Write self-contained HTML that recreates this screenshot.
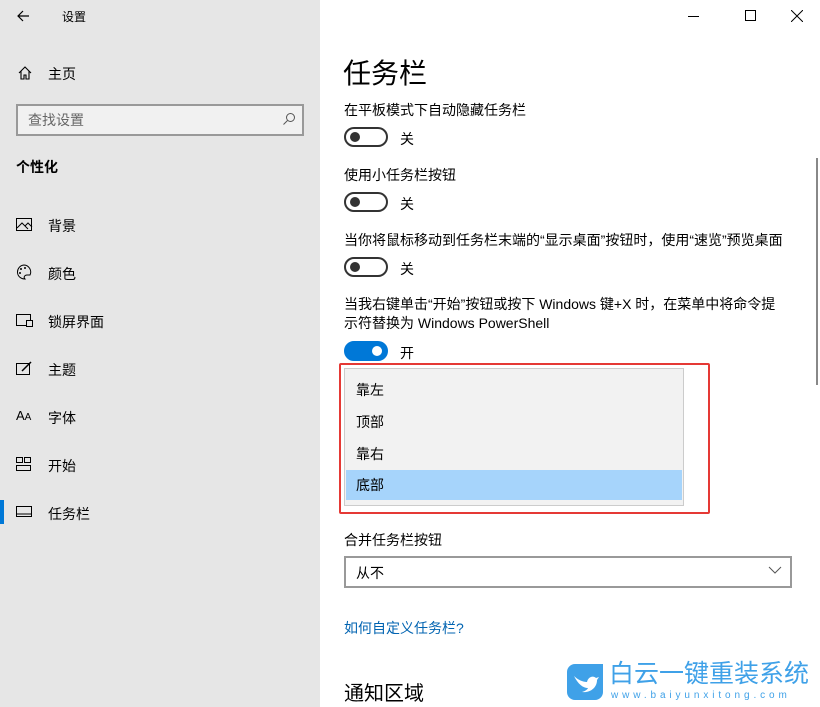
<!DOCTYPE html>
<html><head><meta charset="utf-8"><style>
*{margin:0;padding:0;box-sizing:border-box}
body{width:820px;height:707px;overflow:hidden;background:#fff;font-family:"Liberation Sans","Noto Sans CJK SC",sans-serif;color:#000;position:relative}
.a{position:absolute;white-space:nowrap}
#side{position:absolute;left:0;top:0;width:320px;height:707px;background:#e6e6e6}
.t14{font-size:14px}
.tog{position:absolute;width:44px;height:20px;border:2px solid #333;border-radius:10px}
.tog i{position:absolute;left:4px;top:3px;width:10px;height:10px;border-radius:50%;background:#333}
.on{background:#0078d7;border-color:#0078d7}
.on i{left:auto;right:4px;background:#fff}
svg{position:absolute}
</style></head><body>
<div id="side">
<svg style="left:16px;top:9px" width="14" height="14" viewBox="0 0 14 14"><path d="M13 7H2M7 2L2 7l5 5" stroke="#000" fill="none" stroke-width="1.2"/></svg>
<div class="a" style="left:62px;top:8px;font-size:12px">设置</div>
<svg style="left:17px;top:65px" width="16" height="16" viewBox="0 0 16 16"><path d="M2 8L8 2l6 6M4 6v8h3v-4h2v4h3V6" stroke="#000" fill="none" stroke-width="1.1"/></svg>
<div class="a t14" style="left:48px;top:64px">主页</div>
<div class="a" style="left:16px;top:104px;width:288px;height:32px;border:2px solid #999;background:#f1f1f1"></div>
<div class="a t14" style="left:28px;top:110px;color:#666">查找设置</div>
<svg style="left:282px;top:112px" width="14" height="14" viewBox="0 0 14 14"><circle cx="8.5" cy="5.5" r="4" stroke="#555" fill="none"/><path d="M5.5 8.5L1.5 12.5" stroke="#555"/></svg>
<div class="a t14" style="left:16px;top:157px;font-weight:bold">个性化</div>
<svg style="left:16px;top:218px" width="17" height="14" viewBox="0 0 17 14"><rect x=".5" y=".5" width="15" height="12" stroke="#000" fill="none"/><path d="M1 10l5-5 6 6M9 8l3-3 4 4" stroke="#000" fill="none"/></svg>
<div class="a t14" style="left:48px;top:216px">背景</div>
<svg style="left:16px;top:264px" width="16" height="16" viewBox="0 0 16 16"><path d="M8 1a7 7 0 1 0 1 14c-2-2 0-4 2-4h3a7 7 0 0 0-6-10z" stroke="#000" fill="none"/><circle cx="5" cy="5" r="1"/><circle cx="9" cy="4" r="1"/><circle cx="4" cy="9" r="1"/></svg>
<div class="a t14" style="left:48px;top:264px">颜色</div>
<svg style="left:16px;top:314px" width="18" height="14" viewBox="0 0 18 14"><rect x=".5" y=".5" width="14" height="11" stroke="#000" fill="none"/><rect x="10.5" y="6.5" width="6" height="6" fill="#e6e6e6" stroke="#000"/></svg>
<div class="a t14" style="left:48px;top:312px">锁屏界面</div>
<svg style="left:16px;top:361px" width="17" height="15" viewBox="0 0 17 15"><rect x=".5" y="2.5" width="13" height="11" stroke="#000" fill="none"/><path d="M6 10l9-9" stroke="#000" stroke-width="1.5"/></svg>
<div class="a t14" style="left:48px;top:360px">主题</div>
<div class="a" style="left:16px;top:408px;font-size:13px">A<span style="font-size:10px">A</span></div>
<div class="a t14" style="left:48px;top:408px">字体</div>
<svg style="left:16px;top:457px" width="16" height="14" viewBox="0 0 16 14"><rect x=".5" y=".5" width="6" height="5" stroke="#000" fill="none"/><rect x="8.5" y=".5" width="6" height="5" stroke="#000" fill="none"/><rect x=".5" y="8.5" width="14" height="5" stroke="#000" fill="none"/></svg>
<div class="a t14" style="left:48px;top:456px">开始</div>
<div class="a" style="left:0;top:500px;width:4px;height:24px;background:#0078d7"></div>
<svg style="left:16px;top:506px" width="17" height="12" viewBox="0 0 17 12"><rect x=".5" y=".5" width="15" height="10" stroke="#000" fill="none"/><path d="M1 8h15" stroke="#000"/></svg>
<div class="a t14" style="left:48px;top:504px">任务栏</div>
</div>
<div class="a" style="left:688px;top:16px;width:11px;height:1px;background:#000"></div>
<div class="a" style="left:745px;top:10px;width:11px;height:11px;border:1px solid #000"></div>
<svg style="left:791px;top:10px" width="12" height="12" viewBox="0 0 12 12"><path d="M0 0l12 12M12 0L0 12" stroke="#000"/></svg>
<div class="a" style="left:816px;top:158px;width:2px;height:227px;background:#888"></div>
<div class="a" style="left:343px;top:52px;font-size:28px">任务栏</div>
<div class="a t14" style="left:344px;top:100px">在平板模式下自动隐藏任务栏</div>
<div class="tog" style="left:344px;top:127px"><i></i></div><div class="a t14" style="left:400px;top:129px">关</div>
<div class="a t14" style="left:344px;top:165px">使用小任务栏按钮</div>
<div class="tog" style="left:344px;top:192px"><i></i></div><div class="a t14" style="left:400px;top:194px">关</div>
<div class="a t14" style="left:344px;top:230px">当你将鼠标移动到任务栏末端的“显示桌面”按钮时，使用“速览”预览桌面</div>
<div class="tog" style="left:344px;top:257px"><i></i></div><div class="a t14" style="left:400px;top:259px">关</div>
<div class="a t14" style="left:344px;top:295px;line-height:19px">当我右键单击“开始”按钮或按下 Windows 键+X 时，在菜单中将命令提<br>示符替换为 Windows PowerShell</div>
<div class="tog on" style="left:344px;top:341px"><i></i></div><div class="a t14" style="left:400px;top:343px">开</div>
<div class="a" style="left:339px;top:363px;width:371px;height:151px;border:2px solid #e53935;border-radius:2px"></div>
<div class="a" style="left:344px;top:368px;width:340px;height:138px;background:#f2f2f2;border:1px solid #ccc"></div>
<div class="a" style="left:346px;top:470px;width:336px;height:30px;background:#a6d4fb"></div>
<div class="a t14" style="left:356px;top:380px">靠左</div>
<div class="a t14" style="left:356px;top:412px">顶部</div>
<div class="a t14" style="left:356px;top:444px">靠右</div>
<div class="a t14" style="left:356px;top:475px">底部</div>
<div class="a t14" style="left:344px;top:530px">合并任务栏按钮</div>
<div class="a" style="left:344px;top:556px;width:448px;height:32px;border:2px solid #999"></div>
<div class="a t14" style="left:356px;top:563px">从不</div>
<svg style="left:768px;top:566px" width="14" height="8" viewBox="0 0 14 8"><path d="M1 1l6 6 6-6" stroke="#555" fill="none"/></svg>
<div class="a t14" style="left:344px;top:618px;color:#0063b1">如何自定义任务栏?</div>
<div class="a" style="left:344px;top:677px;font-size:20px">通知区域</div>
<div class="a" style="left:567px;top:664px;width:36px;height:36px;background:#3fa1e8;border-radius:8px 0 8px 8px"></div>
<svg style="left:571px;top:670px" width="28" height="24" viewBox="0 0 28 24"><path d="M3 6c4 4 9 6 13 6 1-5 6-7 9-4l3-1-2 3c0 8-7 13-15 12 3-1 5-2 6-4-5 0-10-4-14-12z" fill="#fff"/></svg>
<div class="a" style="left:609px;top:657px;font-size:25px;line-height:34px;color:#3fa1e8">白云一键重装系统</div>
<div class="a" style="left:611px;top:690px;font-size:10px;line-height:12px;color:#3fa1e8;letter-spacing:3.9px">www.baiyunxitong.com</div>
</body></html>
